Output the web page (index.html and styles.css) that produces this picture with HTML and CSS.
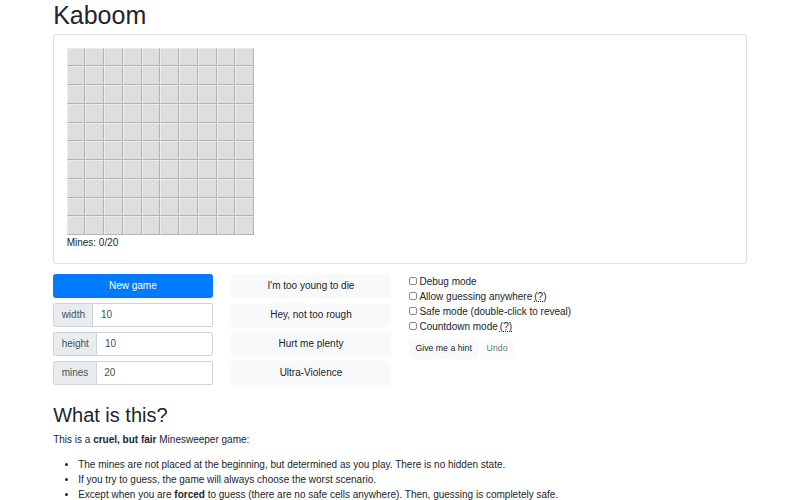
FILE: index.html
```html
<!DOCTYPE html>
<html lang="en">
<head>
    <meta charset="UTF-8">
    <meta name="viewport" content="width=device-width, initial-scale=1.0">
    <title>Kaboom</title>
    <link rel="stylesheet" href="styles.css">
</head>
<body>
    <div class="container">
        <h1 class="title">Kaboom</h1>

        <div class="card">
            <div class="board">
                <div class="cell"></div><div class="cell"></div><div class="cell"></div><div class="cell"></div><div class="cell"></div><div class="cell"></div><div class="cell"></div><div class="cell"></div><div class="cell"></div><div class="cell"></div>
                <div class="cell"></div><div class="cell"></div><div class="cell"></div><div class="cell"></div><div class="cell"></div><div class="cell"></div><div class="cell"></div><div class="cell"></div><div class="cell"></div><div class="cell"></div>
                <div class="cell"></div><div class="cell"></div><div class="cell"></div><div class="cell"></div><div class="cell"></div><div class="cell"></div><div class="cell"></div><div class="cell"></div><div class="cell"></div><div class="cell"></div>
                <div class="cell"></div><div class="cell"></div><div class="cell"></div><div class="cell"></div><div class="cell"></div><div class="cell"></div><div class="cell"></div><div class="cell"></div><div class="cell"></div><div class="cell"></div>
                <div class="cell"></div><div class="cell"></div><div class="cell"></div><div class="cell"></div><div class="cell"></div><div class="cell"></div><div class="cell"></div><div class="cell"></div><div class="cell"></div><div class="cell"></div>
                <div class="cell"></div><div class="cell"></div><div class="cell"></div><div class="cell"></div><div class="cell"></div><div class="cell"></div><div class="cell"></div><div class="cell"></div><div class="cell"></div><div class="cell"></div>
                <div class="cell"></div><div class="cell"></div><div class="cell"></div><div class="cell"></div><div class="cell"></div><div class="cell"></div><div class="cell"></div><div class="cell"></div><div class="cell"></div><div class="cell"></div>
                <div class="cell"></div><div class="cell"></div><div class="cell"></div><div class="cell"></div><div class="cell"></div><div class="cell"></div><div class="cell"></div><div class="cell"></div><div class="cell"></div><div class="cell"></div>
                <div class="cell"></div><div class="cell"></div><div class="cell"></div><div class="cell"></div><div class="cell"></div><div class="cell"></div><div class="cell"></div><div class="cell"></div><div class="cell"></div><div class="cell"></div>
                <div class="cell"></div><div class="cell"></div><div class="cell"></div><div class="cell"></div><div class="cell"></div><div class="cell"></div><div class="cell"></div><div class="cell"></div><div class="cell"></div><div class="cell"></div>
            </div>
            <div class="mines">Mines: 0/20</div>
        </div>

        <div class="controls">
            <div class="col">
                <button class="btn btn-primary">New game</button>
                <div class="input-group">
                    <span class="addon">width</span>
                    <input class="field" type="text" value="10">
                </div>
                <div class="input-group">
                    <span class="addon">height</span>
                    <input class="field" type="text" value="10">
                </div>
                <div class="input-group">
                    <span class="addon">mines</span>
                    <input class="field" type="text" value="20">
                </div>
            </div>

            <div class="col">
                <button class="btn btn-light">I'm too young to die</button>
                <button class="btn btn-light">Hey, not too rough</button>
                <button class="btn btn-light">Hurt me plenty</button>
                <button class="btn btn-light">Ultra-Violence</button>
            </div>

            <div class="col options">
                <label class="check"><input type="checkbox"> Debug mode</label>
                <label class="check"><input type="checkbox"> Allow guessing anywhere <abbr title="help">(?)</abbr></label>
                <label class="check"><input type="checkbox"> Safe mode (double-click to reveal)</label>
                <label class="check"><input type="checkbox"> Countdown mode <abbr title="help">(?)</abbr></label>
                <div class="small-buttons">
                    <button class="btn-sm">Give me a hint</button>
                    <button class="btn-sm" disabled>Undo</button>
                </div>
            </div>
        </div>

        <h2 class="subtitle">What is this?</h2>
        <p>This is a <strong>cruel, but fair</strong> Minesweeper game:</p>
        <ul class="rules">
            <li>The mines are not placed at the beginning, but determined as you play. There is no hidden state.</li>
            <li>If you try to guess, the game will always choose the worst scenario.</li>
            <li>Except when you are <strong>forced</strong> to guess (there are no safe cells anywhere). Then, guessing is completely safe.</li>
        </ul>
    </div>
</body>
</html>
```

FILE: styles.css
```css
* {
    margin: 0;
    padding: 0;
    box-sizing: border-box;
}

html {
    font-size: 10px;
}

body {
    font-family: "Liberation Sans", Arial, sans-serif;
    font-size: 1rem;
    line-height: 1.5;
    color: #212529;
    background: #ffffff;
}

.container {
    width: 693.75px;
    margin: 0 auto;
}

.title {
    font-size: 2.5rem;
    font-weight: 500;
    line-height: 1.2;
    margin-bottom: 4px;
}

.card {
    border: 1px solid rgba(0, 0, 0, 0.125);
    border-radius: 0.25rem;
    padding: 1.25rem;
}

.board {
    display: grid;
    grid-template-columns: repeat(10, 18.75px);
    grid-auto-rows: 18.75px;
}

.cell {
    background: #dedede;
    border-style: solid;
    border-width: 1px;
    border-color: #ececec #b3b3b3 #b3b3b3 #ececec;
}

.controls {
    display: flex;
    gap: 18.75px;
    margin-top: 1rem;
}

.col {
    width: 159.4px;
    display: flex;
    flex-direction: column;
    gap: 5px;
}

.btn {
    height: 24px;
    font-family: inherit;
    font-size: 1rem;
    line-height: 1.5;
    padding: 0 0.75rem;
    border: 1px solid transparent;
    border-radius: 0.25rem;
    text-align: center;
    width: 100%;
}

.btn-primary {
    background: #007bff;
    border-color: #007bff;
    color: #ffffff;
}

.btn-light {
    background: #f8f9fa;
    border-color: #f8f9fa;
    color: #212529;
}

.input-group {
    display: flex;
    height: 24px;
}

.addon {
    display: flex;
    align-items: center;
    padding: 0 0.75rem;
    background: #e9ecef;
    border: 1px solid #ced4da;
    border-radius: 0.25rem 0 0 0.25rem;
    color: #495057;
}

.field {
    flex: 1;
    min-width: 0;
    font-family: inherit;
    font-size: 1rem;
    padding: 0 0.75rem;
    border: 1px solid #ced4da;
    border-left: none;
    border-radius: 0 0.25rem 0.25rem 0;
    color: #495057;
}

.options {
    width: auto;
    gap: 0;
}

.check {
    display: flex;
    align-items: center;
    gap: 2px;
    line-height: 1.5;
}

.check input {
    appearance: none;
    width: 8px;
    height: 8px;
    border: 1px solid #8a8a8a;
    border-radius: 2px;
    background: #ffffff;
}

abbr {
    text-decoration: underline dotted;
}

.small-buttons {
    margin-top: 5px;
}

.btn-sm {
    font-family: inherit;
    font-size: 0.875rem;
    line-height: 1.5;
    padding: 0.25rem 0.5rem;
    background: #f8f9fa;
    border: 1px solid #f8f9fa;
    border-radius: 0.2rem;
    color: #212529;
}

.btn-sm:disabled {
    opacity: 0.65;
}

.subtitle {
    font-size: 2rem;
    font-weight: 500;
    line-height: 1.2;
    margin-top: 18px;
    margin-bottom: 0.5rem;
}

p {
    margin-bottom: 1rem;
}

.rules {
    padding-left: 2.5rem;
}
```
